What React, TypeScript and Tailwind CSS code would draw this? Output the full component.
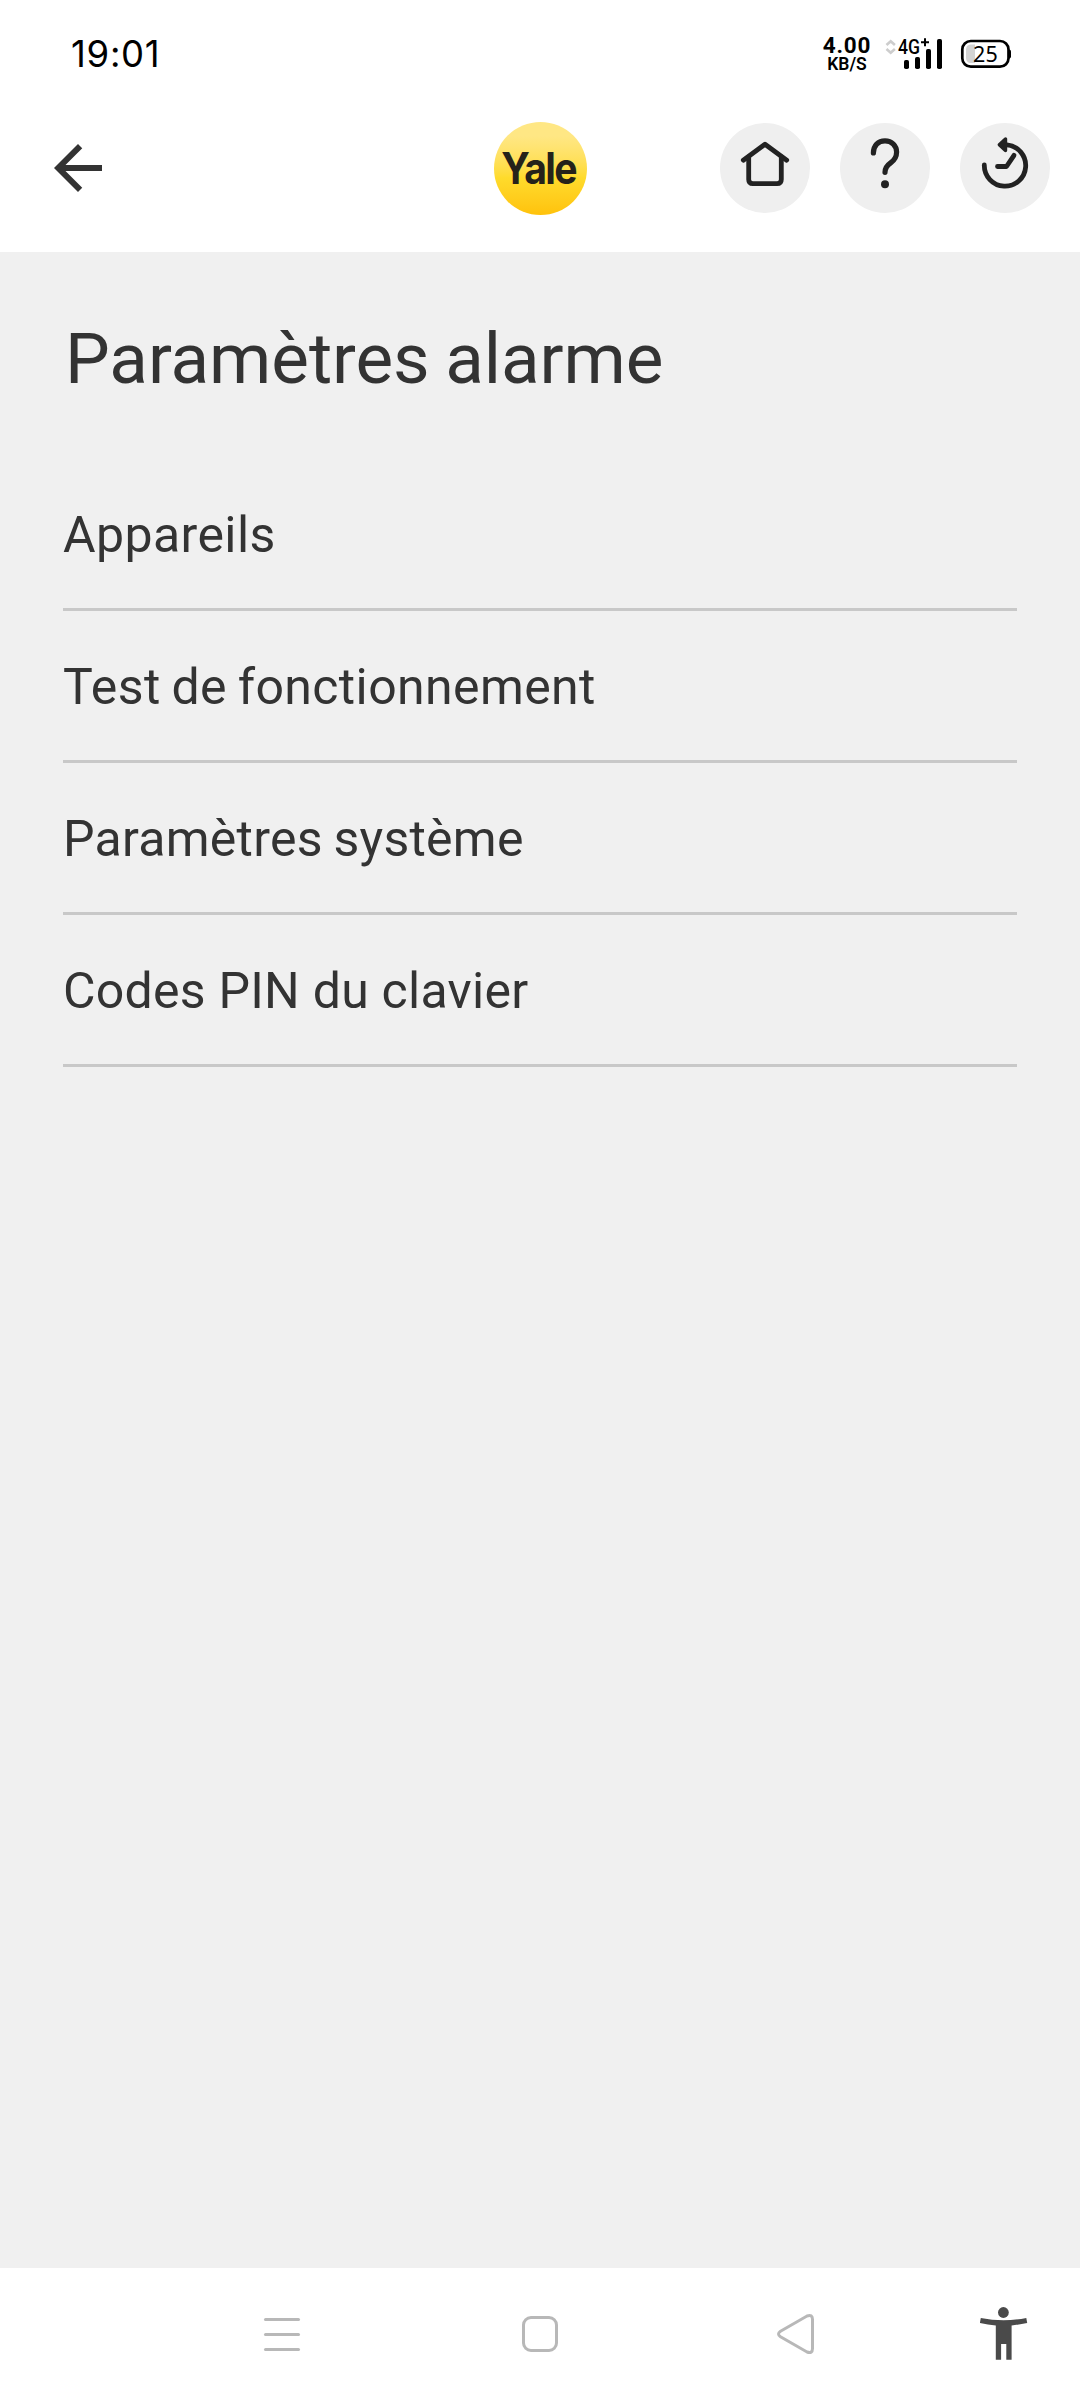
import type { ReactNode } from "react";

const menuItems = [
  { label: "Appareils", spacing: "tracking-[0.4px]" },
  { label: "Test de fonctionnement", spacing: "tracking-[0.38px] [word-spacing:-2px]" },
  { label: "Paramètres système", spacing: "tracking-[0.26px] [word-spacing:-2px]" },
  { label: "Codes PIN du clavier", spacing: "tracking-[0.25px]" },
];

function SignalIcon() {
  return (
    <svg width="60" height="36" viewBox="885 36 60 36" className="block">
      <g fill="none" stroke="#cdcdcd" strokeWidth="2.6">
        <path d="M886.5 45l4.2-3.8 4.2 3.8" />
        <path d="M886.5 49l4.2 3.8 4.2-3.8" />
      </g>
      <text x="898" y="53.7" textLength="22" lengthAdjust="spacingAndGlyphs" className="font-['Roboto'] text-[20.5px] font-medium">
        4G
      </text>
      <path d="M921 42.3h8M925 38.3v8" stroke="#000" strokeWidth="2" />
      <rect x="904" y="60" width="5" height="9" rx="1.8" />
      <rect x="915" y="57" width="5" height="12" rx="1.8" />
      <rect x="926" y="49" width="5" height="20" rx="1.8" />
      <rect x="937" y="39" width="5" height="30" rx="1.8" />
    </svg>
  );
}

function BatteryIcon() {
  return (
    <svg width="52" height="30" viewBox="960 39 52 30" className="block">
      <path d="M975 44.5v18.5h-3.5c-4 0-5.5-2-5.5-5.5v-7c0-4 1.5-6 5.5-6z" fill="#d3d3d3" />
      <rect x="962.3" y="41" width="46.2" height="25.7" rx="8.5" fill="none" stroke="#000" strokeWidth="2.7" />
      <path d="M1008.5 49.5c1.7 0 2.5.8 2.5 2.3v4.4c0 1.5-.8 2.3-2.5 2.3z" />
      <text x="985.5" y="62" textAnchor="middle" className="font-['Noto_Sans'] text-[21.5px] tracking-[0.3px]">
        25
      </text>
    </svg>
  );
}

function StatusBar() {
  return (
    <div className="flex h-[108px] items-center justify-between pl-[71px] pr-[68px] text-black">
      <span className="font-['Inter'] text-[36.5px] leading-[44px] tracking-[0.7px]">19:01</span>
      <div className="flex items-center">
        <div className="mt-[2px] flex w-[50px] flex-col items-center font-['Roboto'] leading-[19px]">
          <span className="text-[22.5px] font-bold tracking-[0.8px]">4.00</span>
          <span className="text-[17.5px] font-semibold">KB/S</span>
        </div>
        <div className="ml-[13px]">
          <SignalIcon />
        </div>
        <div className="ml-[15px]">
          <BatteryIcon />
        </div>
      </div>
    </div>
  );
}

function RoundButton({ label, children }: { label: string; children: ReactNode }) {
  return (
    <button aria-label={label} className="size-[90px] rounded-full bg-[#efefef]">
      <svg width="90" height="90" viewBox="0 0 90 90" fill="none" stroke="#222" strokeWidth="4.8" strokeLinecap="round" strokeLinejoin="round">
        {children}
      </svg>
    </button>
  );
}

function Header() {
  return (
    <header className="grid h-[144px] grid-cols-[1fr_93px_1fr] items-center pb-6 pl-[42px] pr-[30px]">
      <button aria-label="Retour" className="size-[72px]">
        <svg width="72" height="72" viewBox="0 0 24 24" fill="#333">
          <path d="M20 11H7.83l5.59-5.59L12 4l-8 8 8 8 1.41-1.41L7.83 13H20v-2z" />
        </svg>
      </button>
      <div className="-ml-[6px] flex size-[93px] items-center justify-center rounded-full bg-linear-to-b from-[#ffe784] from-15% via-[#ffdb2b] via-60% to-[#ffc20a]">
        <span className="mt-[1px] -ml-[2px] scale-x-[0.9] font-['Inter'] text-[43.5px] font-bold tracking-[-1.8px] text-[#25221a]">Yale</span>
      </div>
      <div className="flex justify-end gap-[30px]">
        <RoundButton label="Accueil">
          <path d="M23.3 37.2L45 21.3l21.7 15.9" />
          <path d="M28.7 34v22.5q0 4.2 4.2 4.2h24.2q4.2 0 4.2-4.2V34" />
        </RoundButton>
        <RoundButton label="Aide">
          <path strokeWidth="5.2" d="M33.4 30c0-7.5 4.8-12.2 11.6-12.2s11.6 4.9 11.6 11.2c0 5.6-2.6 8.6-6.1 11-3.5 2.5-5.5 5.2-5.5 9.3" />
          <circle cx="45" cy="61.3" r="4" fill="#222" stroke="none" />
        </RoundButton>
        <RoundButton label="Historique">
          <path d="M24.3 42A20.7 20.7 0 1 0 47 21.9" />
          <path d="M39.3 21.7L45.5 16v11.5z" fill="#222" strokeWidth="3.4" />
          <path d="M37.5 43.5H46.5L54 32.3" />
        </RoundButton>
      </div>
    </header>
  );
}

function NavBar() {
  return (
    <nav className="flex h-[132px] items-center pl-[264px] pr-[52px]">
      <div className="flex w-9 flex-col gap-3">
        <span className="h-[3px] rounded-full bg-[#b8b8b8]" />
        <span className="h-[3px] rounded-full bg-[#b8b8b8]" />
        <span className="h-[3px] rounded-full bg-[#b8b8b8]" />
      </div>
      <div className="ml-[222px] size-9 rounded-[9px] border-[3px] border-[#b8b8b8]" />
      <svg width="40" height="44" viewBox="776 2312 40 44" fill="none" stroke="#b8b8b8" strokeWidth="3" className="ml-[218px]">
        <path d="M780.5 2331.2L807 2316q5.5-2 5.5 3.5v29q0 5.5-5.5 3.5l-26.500-15.200q-4-2.800 0-5.600z" />
      </svg>
      <svg width="48" height="54" viewBox="980 2308 48 54" fill="#4a4a4a" className="ml-auto">
        <circle cx="1003.4" cy="2313.5" r="5.4" />
        <path d="M980.8 2319q22.6 4.5 45.5 0l.9 4.9q-7.5 1.7-15.6 2.5v34.4h-5.3V2345h-5.2v15.8h-5.3v-34.4q-8-.8-15.9-2.5z" />
      </svg>
    </nav>
  );
}

export default function App() {
  return (
    <div className="flex h-[2400px] w-[1080px] flex-col bg-white font-['Roboto',sans-serif]">
      <StatusBar />
      <Header />
      <main className="flex-1 bg-[#f0f0f0] px-[63px] pt-[71px] text-[#333]">
        <h1 className="pl-[2px] text-[71px] leading-[72px] tracking-[-0.05px] [word-spacing:-2px]">Paramètres alarme</h1>
        <ul className="mt-[64px]">
          {menuItems.map((item) => (
            <li key={item.label} className="flex h-[152px] items-center border-b-[3px] border-[#c8c8c8] pt-[3px]">
              <span className={`text-[50px] leading-[60px] ${item.spacing}`}>{item.label}</span>
            </li>
          ))}
        </ul>
      </main>
      <NavBar />
    </div>
  );
}
